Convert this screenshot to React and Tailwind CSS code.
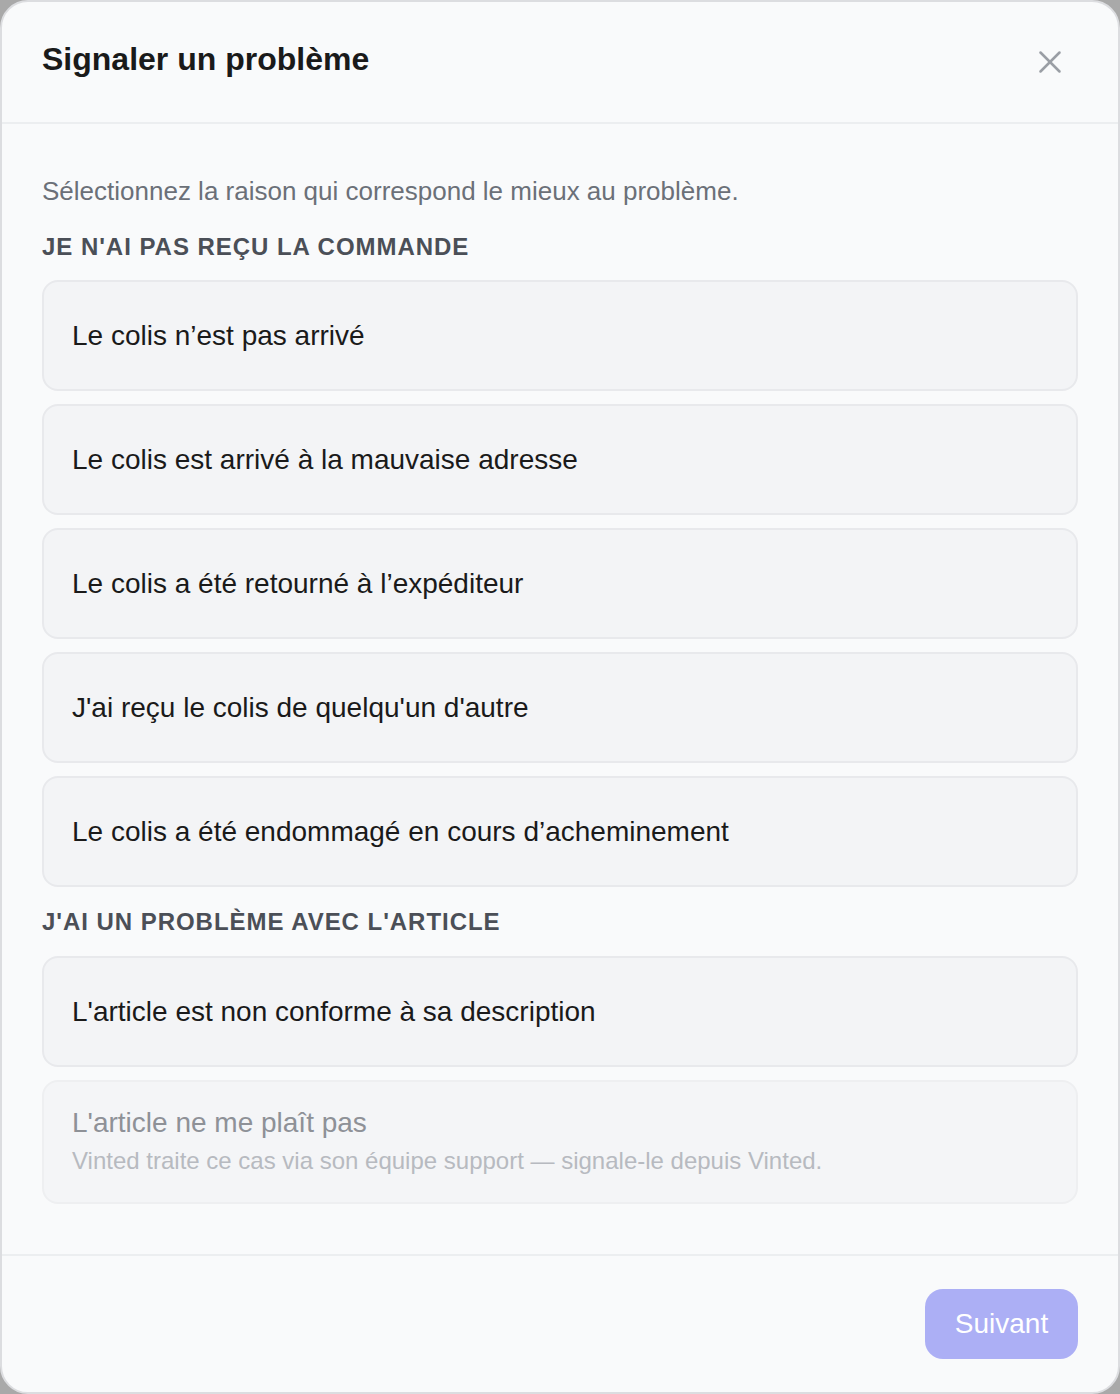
import { X } from 'lucide-react';

const groups = [
  {
    title: "Je n'ai pas reçu la commande",
    items: [
      'Le colis n’est pas arrivé',
      'Le colis est arrivé à la mauvaise adresse',
      'Le colis a été retourné à l’expéditeur',
      "J'ai reçu le colis de quelqu'un d'autre",
      'Le colis a été endommagé en cours d’acheminement'
    ]
  },
  {
    title: "J'ai un problème avec l'article",
    items: ["L'article est non conforme à sa description"]
  }
];

function ReasonCard({ label }) {
  return (
    <button
      type="button"
      className="flex h-[111px] w-full items-center rounded-[16px] border-2 border-[#e8e9ec] bg-[#f3f4f6] px-[28px] text-left text-[28px] leading-[34px] text-[#1a1a1a]"
    >
      {label}
    </button>
  );
}

export default function App() {
  return (
    <div className="min-h-screen bg-[#a9a9a9]" style={{ fontFamily: '"Liberation Sans", Arial, sans-serif' }}>
      <div className="flex h-[1394px] w-[1120px] flex-col overflow-hidden rounded-[28px] border-2 border-[#dcdde0] bg-[#f9fafb]">
        <header className="flex h-[122px] shrink-0 items-center justify-between border-b-2 border-[#eceef0] pl-[40px] pr-[49px]">
          <h1 className="mb-[6px] text-[32px] font-bold leading-[40px] text-[#1a1a1a]">Signaler un problème</h1>
          <button type="button" className="text-[#9a9ea5]">
            <X size={38} strokeWidth={1.6} />
          </button>
        </header>

        <main className="flex-1 px-[40px] pt-[51px]">
          <p className="text-[26px] leading-[32px] text-[#6b7078]">
            Sélectionnez la raison qui correspond le mieux au problème.
          </p>

          {groups.map((group, gi) => (
            <section key={group.title} className={gi === 0 ? 'mt-[26px]' : 'mt-[21px]'}>
              <h2 className="text-[24px] font-bold uppercase leading-[28px] tracking-[0.04em] text-[#4b4f57]">
                {group.title}
              </h2>
              <div className={`flex flex-col gap-[13px] ${gi === 0 ? 'mt-[19px]' : 'mt-[20px]'}`}>
                {group.items.map((item) => (
                  <ReasonCard key={item} label={item} />
                ))}
                <div className={gi === 1 ? 'flex h-[124px] flex-col rounded-[16px] border-2 border-[#eeeff1] bg-[#f4f5f7] px-[28px] pt-[24px]' : 'hidden'}>
                  <p className="text-[28px] leading-[34px] text-[#8e9197]">L'article ne me plaît pas</p>
                  <p className="mt-[7px] text-[24px] leading-[28px] text-[#b7bac0]">
                    Vinted traite ce cas via son équipe support — signale-le depuis Vinted.
                  </p>
                </div>
              </div>
            </section>
          ))}
        </main>

        <footer className="flex h-[138px] shrink-0 items-center justify-end border-t-2 border-[#eceef0] px-[40px]">
          <button
            type="button"
            className="h-[70px] w-[153px] rounded-[18px] bg-[#acaff5] text-[28px] text-white"
          >
            Suivant
          </button>
        </footer>
      </div>
    </div>
  );
}
